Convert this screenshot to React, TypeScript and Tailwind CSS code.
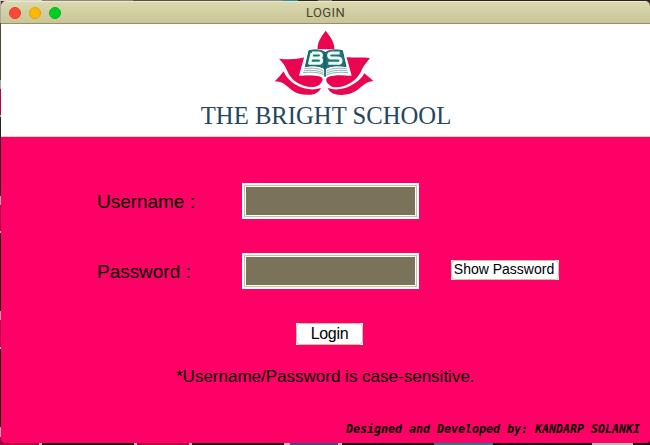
import React from "react";

function Logo() {
  return (
    <svg viewBox="0 0 360 225" className="h-[75px] w-[120px]">
      <g fill="#e9054f">
        <path d="M182 17C165 40 156 55 158 74C170 71 178 74 183 80C189 74 198 72 208 76C210 55 200 40 182 17Z" />
        <path d="M42 101C75 105 98 102 120 97L103 151C125 152 152 148 172 158C176 167 165 184 146 186C110 188 78 165 68 140C62 125 54 112 42 101Z" />
        <path d="M315 99C292 96 265 98 244 97L258 151C235 152 205 148 186 158C178 166 190 182 207 187C245 188 275 165 288 140C295 122 304 114 315 99Z" />
        <path d="M56 139C48 150 40 158 29 169C55 169 60 180 80 195C100 210 130 213 150 206C160 202 165 196 168 189C145 197 116 193 95 181C75 170 62 155 56 139Z" />
        <path d="M298 145C306 152 315 158 325 168C300 172 294 182 276 196C256 210 228 213 206 206C196 202 191 196 188 189C210 197 240 193 259 181C279 170 292 158 298 145Z" />
      </g>
      <path d="M124 73L102 152C135 151 164 149 179 157C198 148 228 150 260 152L238 73Z" fill="#fff" />
      <path d="M132 77C150 73 171 74 181 83C192 74 215 73 232 77L243 125C220 120 194 122 180 132C164 122 142 120 121 125Z" fill="#287078" stroke="#155c65" strokeWidth="3" />
      <path d="M180 82V155" stroke="#155c65" strokeWidth="5" />
      <g fill="none" stroke="#e8fff5" strokeWidth="9" strokeLinejoin="round">
        <path d="M141 84H162Q171 85 169 93Q168 99 160 99H138M160 99Q171 100 170 108Q169 115 159 115H134L141 84" />
        <path d="M224 84H199Q190 85 191 92Q192 99 201 99H217Q228 99 228 107Q228 115 218 115H190" />
      </g>
      <g fill="none" stroke="#58868a" strokeWidth="2">
        <path d="M118 131C140 128 161 129 176 139M116 137C138 134 162 136 176 145M114 143C139 140 163 142 176 150" />
        <path d="M245 131C222 128 199 129 184 139M247 137C224 134 200 136 184 145M249 143C224 140 200 142 184 150" />
      </g>
    </svg>
  );
}

function Field({ label, children }: { label: string; children?: React.ReactNode }) {
  return (
    <div className="flex h-9 items-center pl-24">
      <label className="w-[145px] whitespace-pre pt-0.5 text-[19px] leading-9 tracking-[-0.03px]">{label}</label>
      <div className="h-9 w-[177px] border-2 border-white bg-white">
        <div className="h-full border border-[#c9c493] p-px">
          <div className="h-full bg-[#7b725a]" />
        </div>
      </div>
      {children}
    </div>
  );
}

export default function App() {
  return (
    <div className="flex h-[445px] w-[650px] flex-col overflow-hidden bg-[#302a25] font-['Liberation_Sans',Arial,sans-serif] text-black">
      <div className="h-px shrink-0 bg-[linear-gradient(90deg,#d5d5d8_0_42px,#8c8676_42px_133px,#57503f_133px_240px,#8a8a88_240px_283px,#249099_283px_298px,#2b2522_298px_318px,#8c8676_318px_332px,#2b2522_332px)]" />
      <div className="flex h-[442px] shrink-0">
        <div className="w-px shrink-0 bg-[linear-gradient(180deg,#aaa_0_22px,#51483a_22px_79px,#aaa_79px_88px,#b8004b_88px_114px,#bbb_114px_116px,#25211b_116px_195px,#aaa_195px_204px,#b8004b_204px_230px,#bbb_230px_232px,#16130f_232px_310px,#aaa_310px_319px,#b8004b_319px_346px,#bbb_346px_348px,#16130f_348px_426px,#aaa_426px_436px,#b8004b_436px)]" />
        <div className="flex w-[649px] flex-col overflow-hidden rounded-b-[4px] rounded-t-[5px] bg-[#ff0066]">
          <header className="relative flex h-[23px] shrink-0 items-center justify-center border-b border-t border-b-[#96906a] border-t-[#eceacb] bg-gradient-to-b from-[#dad8af] to-[#c9c597] font-[Roboto,sans-serif] text-[13px] text-[#49452e]">
            <div className="absolute left-2 flex gap-2">
              <span className="size-3 rounded-full border border-[#e33b30] bg-[#ff4637]" />
              <span className="size-3 rounded-full border border-[#e5a000] bg-[#ffb900]" />
              <span className="size-3 rounded-full border border-[#06b61c] bg-[#00ce20]" />
            </div>
            <span className="tracking-[0.4px]">LOGIN</span>
          </header>
          <section className="flex h-[113px] shrink-0 flex-col items-center border-b border-[#e2ddb5] bg-white">
            <div className="mt-px h-[75px] pr-px"><Logo /></div>
            <h1 className="whitespace-nowrap pl-px font-['Liberation_Serif','Times_New_Roman',serif] text-[24.7px] leading-8 text-[#24475d]">THE BRIGHT SCHOOL</h1>
          </section>
          <main className="flex flex-col pt-[46px]">
            <Field label="Username :" />
            <div className="h-[34px]" />
            <Field label="Password :">
              <button className="-mt-0.5 ml-8 h-5 w-[108px] bg-white text-[14px] leading-none">
                <span className="flex h-full items-center justify-center whitespace-nowrap rounded-[4px] border border-[#c8c29c] pb-0.5 pr-0.5">Show Password</span>
              </button>
            </Field>
            <button className="ml-[295px] mt-[34px] h-[22px] w-[67px] bg-white text-base leading-none">
              <span className="flex h-full items-center justify-center rounded-[4px] border border-[#c8c29c] tracking-[-0.3px]">Login</span>
            </button>
            <p className="ml-[175px] mt-[22px] whitespace-nowrap text-[17px] leading-5">*Username/Password is case-sensitive.</p>
            <p className="ml-[345px] mt-[34px] whitespace-nowrap font-['DejaVu_Sans_Mono',monospace] text-[11.63px] font-bold italic leading-4">Designed and Developed by: KANDARP SOLANKI</p>
          </main>
        </div>
      </div>
      <div className="h-0.5 shrink-0 bg-[linear-gradient(90deg,#b0003f_0_39px,#bbb_39px_42px,#19140f_42px_134px,#bbb_134px_137px,#b0003f_137px_189px,#bbb_189px_192px,#19140f_192px_284px,#bbb_284px_290px,#354f80_290px_338px,#bbb_338px_342px,#19140f_342px_434px,#218087_434px_493px,#19140f_493px_592px,#bbb_592px_633px,#19140f_633px)]" />
    </div>
  );
}
